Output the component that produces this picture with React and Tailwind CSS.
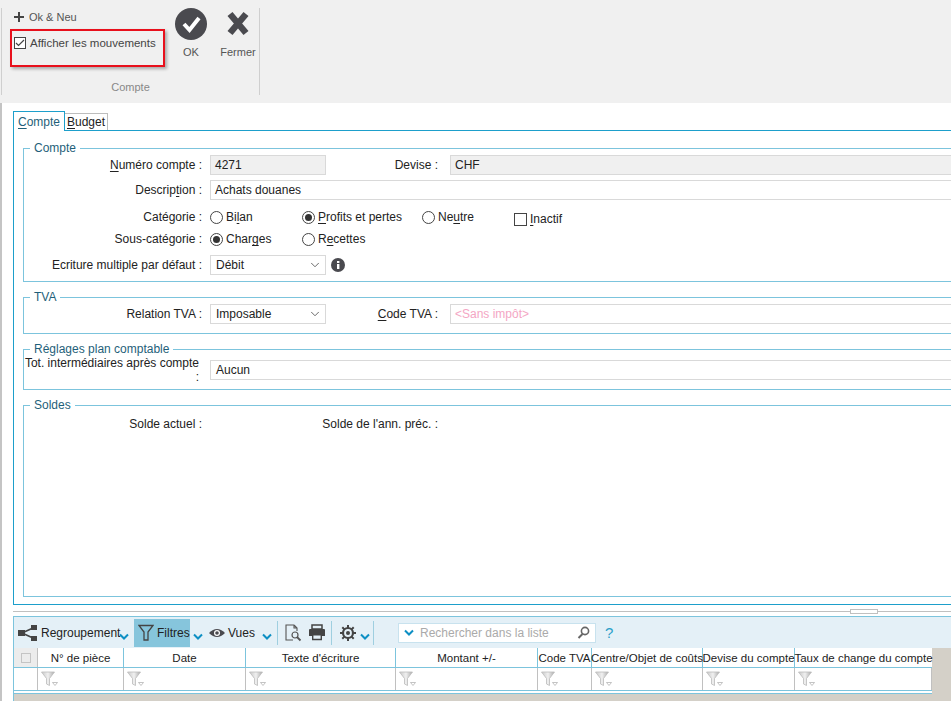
import { ChevronDown } from "lucide-react";

const font = { fontFamily: "'Liberation Sans', Arial, sans-serif" };

const U = ({ children }) => <span className="underline underline-offset-2">{children}</span>;

function Radio({ checked, label, className }) {
  return (
    <div className={`flex items-center gap-[3px] ${className}`}>
      <span className="flex h-[13px] w-[13px] items-center justify-center rounded-full border border-[#444] bg-white">
        {checked && <span className="h-[7px] w-[7px] rounded-full bg-[#333]" />}
      </span>
      <span>{label}</span>
    </div>
  );
}

function Group({ title, className, children }) {
  return (
    <fieldset className={`mx-[9px] mt-[8px] w-[960px] border border-[#7cc4dd] ${className}`}>
      <legend className="ml-[6px] px-[4px] text-[12px] leading-[14px] text-[#1f5f7a]">{title}</legend>
      {children}
    </fieldset>
  );
}

function Label({ children, className = "w-[178px]" }) {
  return <div className={`shrink-0 pr-0 text-right ${className}`}>{children}</div>;
}

function Select({ value }) {
  return (
    <div className="ml-[8px] flex h-[20px] w-[116px] items-center justify-between border border-[#d9d9d9] bg-white pl-[5px] pr-[3px]">
      <span>{value}</span>
      <ChevronDown size={14} strokeWidth={1.5} className="text-[#555]" />
    </div>
  );
}

function Chevron({ className = "" }) {
  return (
    <svg width="10" height="7" viewBox="0 0 10 7" className={className}>
      <path d="M1 1.5 L5 5.5 L9 1.5" fill="none" stroke="#0d8fc4" strokeWidth="2" />
    </svg>
  );
}

function Funnel() {
  return (
    <svg width="18" height="16" viewBox="0 0 18 16" className="ml-[3px]">
      <defs>
        <linearGradient id="fg" x1="0" x2="1" y1="0" y2="0">
          <stop offset="0" stopColor="#c8c8c8" />
          <stop offset="0.5" stopColor="#f0f0f0" />
          <stop offset="1" stopColor="#aaa" />
        </linearGradient>
      </defs>
      <path d="M0.5 1 H13.5 L8.5 7.5 V14.5 L5.5 13 V7.5 Z" fill="url(#fg)" stroke="#bbb" strokeWidth="0.8" />
      <path d="M11.5 11.5 H16.5 L14 14.5 Z" fill="#fff" stroke="#aaa" strokeWidth="0.7" />
    </svg>
  );
}

const columns = [
  { label: "N° de pièce", w: "w-[86px]" },
  { label: "Date", w: "w-[122px]" },
  { label: "Texte d'écriture", w: "w-[150px]" },
  { label: "Montant +/-", w: "w-[142px]" },
  { label: "Code TVA", w: "w-[54px]" },
  { label: "Centre/Objet de coûts", w: "w-[111px]" },
  { label: "Devise du compte", w: "w-[92px]" },
  { label: "Taux de change du compte", w: "w-[137px]" },
];

export default function App() {
  return (
    <div className="h-[701px] w-[951px] overflow-hidden bg-white text-[12px] leading-[14px] text-[#222]" style={font}>
      {/* RIBBON */}
      <div className="h-[103px] bg-[#f0f0f0] pl-[1px] pt-[8px]">
        <div className="flex h-[87px] w-[259px] flex-col border-x border-[#cfcfcf]">
          <div className="flex flex-1">
            <div className="w-[163px] pl-[8px]">
              <div className="flex h-[18px] items-center gap-[5px] pl-[4px] text-[#555]">
                <svg width="10" height="10" viewBox="0 0 10 10">
                  <path d="M4 0 H6 V4 H10 V6 H6 V10 H4 V6 H0 V4 H4 Z" fill="#444" />
                </svg>
                <span className="text-[11px]">Ok &amp; Neu</span>
              </div>
              <div className="mt-[3px] h-[38px] w-[155px] border-2 border-[#e8101c] pl-[2px] pt-[5px] shadow-[2px_2px_3px_rgba(0,0,0,0.3)]">
                <div className="flex items-center gap-[4px] text-[#444]">
                  <span className="flex h-[12px] w-[12px] items-center justify-center border border-[#444] bg-white">
                    <svg width="10" height="8" viewBox="0 0 10 8">
                      <path d="M1 4 L3.5 6.5 L9 1" fill="none" stroke="#444" strokeWidth="1.2" />
                    </svg>
                  </span>
                  <span className="text-[11.5px]">Afficher les mouvements</span>
                </div>
              </div>
            </div>
            <div className="flex w-[50px] flex-col items-center pl-[2px] text-[#555]">
              <svg width="32" height="32" viewBox="0 0 32 32">
                <circle cx="16" cy="16" r="16" fill="#4a4a4f" />
                <path d="M9 16 L14.5 22 L24 10" fill="none" stroke="#fff" strokeWidth="4" />
              </svg>
              <span className="mt-[5px] text-[11px]">OK</span>
            </div>
            <div className="flex w-[43px] flex-col items-center pl-[3px] text-[#555]">
              <svg width="32" height="32" viewBox="0 0 32 32">
                <path d="M8 6 L24 25 M24 6 L8 25" stroke="#4a4a4f" strokeWidth="6.5" fill="none" />
              </svg>
              <span className="mt-[5px] text-[11px]">Fermer</span>
            </div>
          </div>
          <div className="pb-[1px] text-center text-[11px] text-[#888]">Compte</div>
        </div>
      </div>

      {/* BODY */}
      <div className="h-[598px] border-l-2 border-[#c4c4c4] pl-[11px] pt-[8px]">
        {/* TABS */}
        <div className="relative z-10 -mb-px flex h-[20px] items-end">
          <div className="flex h-[20px] w-[52px] items-center justify-center border border-b-0 border-[#1d9fcb] bg-white text-[#1f5f7a]">
            <span><U>C</U>ompte</span>
          </div>
          <div className="mb-px flex h-[17px] w-[43px] items-center justify-center border border-b-0 border-l-0 border-[#bdbdbd] bg-white">
            <span><U>B</U>udget</span>
          </div>
        </div>

        {/* PANEL */}
        <div className="h-[475px] w-[960px] border border-[#1d9fcb] pt-[2px]">
          <Group title="Compte" className="h-[141px]">
            <div className="flex h-[20px] items-center">
              <Label><U>N</U>uméro compte :</Label>
              <div className="ml-[8px] flex h-[20px] w-[116px] items-center border border-[#d9d9d9] bg-[#f0f0f0] pl-[4px]">4271</div>
              <Label className="w-[112px]">Devise :</Label>
              <div className="ml-[12px] flex h-[20px] flex-1 items-center border border-[#d9d9d9] bg-[#f0f0f0] pl-[4px]">CHF</div>
            </div>
            <div className="mt-[5px] flex h-[20px] items-center">
              <Label>Descrip<U>t</U>ion :</Label>
              <div className="ml-[8px] flex h-[20px] flex-1 items-center border border-[#d9d9d9] pl-[4px]">Achats douanes</div>
            </div>
            <div className="mt-[7px] flex h-[20px] items-center">
              <Label>Catégorie :</Label>
              <div className="ml-[8px] flex items-center">
                <Radio label={<>Bi<U>l</U>an</>} className="w-[92px]" />
                <Radio checked label={<><U>P</U>rofits et pertes</>} className="w-[120px]" />
                <Radio label={<>Ne<U>u</U>tre</>} className="w-[92px]" />
                <div className="flex translate-y-[2px] items-center gap-[3px]">
                  <span className="h-[13px] w-[13px] border border-[#444]" />
                  <span><U>I</U>nactif</span>
                </div>
              </div>
            </div>
            <div className="mt-[2px] flex h-[20px] items-center">
              <Label>Sous-catégorie :</Label>
              <div className="ml-[8px] flex items-center">
                <Radio checked label={<>Char<U>g</U>es</>} className="w-[92px]" />
                <Radio label={<>R<U>e</U>cettes</>} className="w-[120px]" />
              </div>
            </div>
            <div className="mt-[6px] flex h-[20px] items-center">
              <Label>Ecriture multiple par défaut :</Label>
              <Select value="Débit" />
              <svg width="14" height="14" viewBox="0 0 14 14" className="ml-[5px]">
                <circle cx="7" cy="7" r="7" fill="#4a4a4f" />
                <rect x="6" y="6" width="2.4" height="5" fill="#fff" />
                <rect x="6" y="3" width="2.4" height="2" fill="#fff" />
              </svg>
            </div>
          </Group>

          <Group title="TVA" className="h-[44px]">
            <div className="flex h-[20px] items-center">
              <Label>Relation TVA :</Label>
              <Select value="Imposable" />
              <Label className="w-[112px]"><U>C</U>ode TVA :</Label>
              <div className="ml-[12px] flex h-[20px] flex-1 items-center border border-[#d9d9d9] pl-[4px] text-[#f4a6c4]">&lt;Sans impôt&gt;</div>
            </div>
          </Group>

          <Group title="Réglages plan comptable" className="h-[48px]">
            <div className="mt-[4px] flex h-[20px] items-center">
              <Label className="w-[175px]">Tot. intermédiaires après compte :</Label>
              <div className="ml-[11px] flex h-[20px] flex-1 items-center border border-[#d9d9d9] pl-[5px]">Aucun</div>
            </div>
          </Group>

          <Group title="Soldes" className="h-[199px]">
            <div className="mt-[2px] flex h-[20px] items-center">
              <Label>Solde actuel :</Label>
              <Label className="w-[236px]">Solde de l'ann. préc. :</Label>
            </div>
          </Group>
        </div>

        {/* SPLITTER */}
        <div className="flex h-[11px] w-[960px] items-center pt-px">
          <div className="h-px w-[837px] bg-[#c0c0c0]" />
          <div className="h-[5px] w-[28px] border border-[#c0c0c0]" />
          <div className="h-px flex-1 bg-[#c0c0c0]" />
        </div>

        {/* LIST */}
        <div className="h-[85px] w-[960px] border-l border-t border-[#7cc4dd] bg-[#d4d0c8]">
          <div className="flex h-[31px] items-center bg-[#e4f0f7]">
            <svg width="20" height="16" viewBox="0 0 20 16" className="ml-[4px]">
              <path d="M4 8 L15 3 M4 8 L15 13" stroke="#444" strokeWidth="1.5" />
              <rect x="0" y="5" width="7" height="6" fill="#444" />
              <rect x="13" y="0" width="6" height="5" fill="#444" />
              <rect x="13" y="11" width="6" height="5" fill="#444" />
            </svg>
            <span className="ml-[3px] w-[78px]">Regroupement</span>
            <Chevron className="mt-[8px]" />
            <div className="ml-[5px] flex h-[28px] w-[56px] items-center bg-[#86c5dc] pl-[4px]">
              <svg width="16" height="18" viewBox="0 0 16 18">
                <path d="M1 1.5 H15 L10 8 V16 H6 V8 Z" fill="none" stroke="#444" strokeWidth="1.3" />
              </svg>
              <span className="ml-[3px]">Filtres</span>
            </div>
            <Chevron className="ml-[3px] mt-[8px]" />
            <svg width="16" height="10" viewBox="0 0 16 10" className="ml-[6px]">
              <path d="M0 5 Q8 -3 16 5 Q8 13 0 5 Z" fill="#4a4a4f" />
              <circle cx="8" cy="5" r="3" fill="#fff" />
              <circle cx="8" cy="5" r="1.8" fill="#4a4a4f" />
            </svg>
            <span className="ml-[3px] w-[34px]">Vues</span>
            <Chevron className="mt-[8px]" />
            <div className="ml-[5px] h-[24px] w-px bg-[#9fcfe0]" />
            <svg width="18" height="18" viewBox="0 0 18 18" className="ml-[6px]">
              <path d="M10 1 H2 V16 H9 M10 1 L13 4 V7 M10 1 V4 H13" fill="none" stroke="#555" strokeWidth="1.1" />
              <circle cx="11" cy="11" r="3" fill="none" stroke="#555" strokeWidth="1.2" />
              <path d="M13 13 L16.5 16.5" stroke="#555" strokeWidth="1.8" />
            </svg>
            <svg width="18" height="17" viewBox="0 0 18 17" className="ml-[6px]">
              <path d="M4 1 H14 V5 H4 Z" fill="none" stroke="#444" strokeWidth="1.5" />
              <path d="M1 6 Q1 5 2 5 H16 Q17 5 17 6 V12 H14 V10 H4 V12 H1 Z" fill="#444" />
              <path d="M4.7 10.7 H13.3 V15.5 H4.7 Z" fill="none" stroke="#444" strokeWidth="1.4" />
            </svg>
            <div className="ml-[5px] h-[24px] w-px bg-[#9fcfe0]" />
            <svg width="16" height="16" viewBox="0 0 16 16" className="ml-[8px]">
              <circle cx="8" cy="8" r="5" fill="none" stroke="#444" strokeWidth="2.2" />
              <circle cx="8" cy="8" r="2" fill="#444" />
              <path d="M8 0 V3 M8 13 V16 M0 8 H3 M13 8 H16 M2.3 2.3 L4.4 4.4 M11.6 11.6 L13.7 13.7 M13.7 2.3 L11.6 4.4 M4.4 11.6 L2.3 13.7" stroke="#444" strokeWidth="2" />
            </svg>
            <Chevron className="ml-[4px] mt-[8px]" />
            <div className="ml-[3px] h-[24px] w-px bg-[#9fcfe0]" />
            <div className="ml-[24px] flex h-[20px] w-[198px] items-center border border-[#c8e2ee] bg-white pl-[5px] pr-[5px]">
              <Chevron />
              <span className="ml-[6px] flex-1 text-[#aaa]">Rechercher dans la liste</span>
              <svg width="13" height="13" viewBox="0 0 13 13">
                <circle cx="8" cy="5" r="3.6" fill="none" stroke="#666" strokeWidth="1.6" />
                <path d="M5.5 8 L1.5 12" stroke="#666" strokeWidth="2" />
              </svg>
            </div>
            <span className="ml-[9px] text-[15px] text-[#2b9fc9]">?</span>
          </div>

          <div className="w-[918px]">
            <div className="flex h-[20px] border-b border-[#7cc4dd] bg-white">
              <div className="flex w-[24px] items-center justify-center border-r border-[#c0c0c0] bg-[#ececec]">
                <span className="h-[10px] w-[10px] border border-[#c4c4c4]" />
              </div>
              {columns.map((c) => (
                <div key={c.label} className={`flex ${c.w} items-center justify-center whitespace-nowrap border-r border-[#7cc4dd] text-[11.5px] last:border-r-0`}>
                  {c.label}
                </div>
              ))}
            </div>
            <div className="flex h-[23px] border-b border-[#7cc4dd] bg-white">
              <div className="w-[24px] border-r border-[#c0c0c0]" />
              {columns.map((c) => (
                <div key={c.label} className={`flex ${c.w} items-center border-r border-[#c0c0c0]`}>
                  <Funnel />
                </div>
              ))}
            </div>
            <div className="h-[3px] border-b border-[#7cc4dd] bg-white" />
          </div>
        </div>
      </div>
    </div>
  );
}
